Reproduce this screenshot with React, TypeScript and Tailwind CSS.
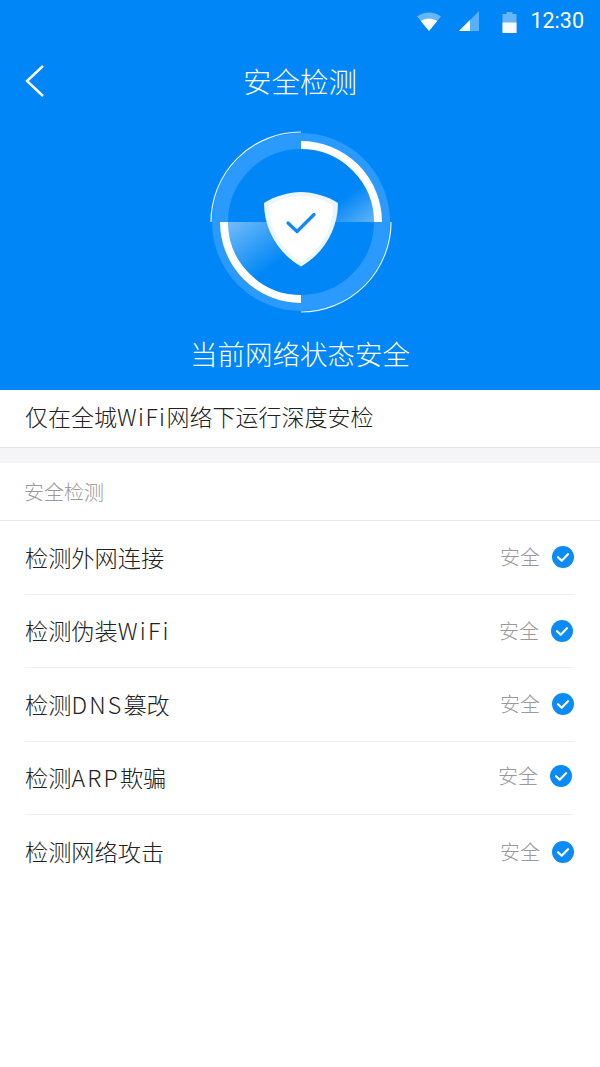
import React from "react";

const font = { fontFamily: '"Noto Sans CJK SC", "Liberation Sans", sans-serif' };

const rows = [
  { before: "检测外网连接", latin: "", after: "", lift: "-mt-[1px]", shift: "" },
  { before: "检测伪装", latin: "WiFi", after: "", lift: "mt-0", shift: "pr-[1px]" },
  { before: "检测", latin: "DNS", after: "篡改", lift: "-mt-[1px]", shift: "" },
  { before: "检测", latin: "ARP", after: "欺骗", lift: "-mt-[4px]", shift: "pr-[2px]" },
  { before: "检测网络攻击", latin: "", after: "", lift: "mt-0", shift: "" },
];

function StatusBar() {
  return (
    <div className="h-[42px] flex items-center justify-end pr-[16px] text-white">
      <svg width="26" height="22" viewBox="0 0 26 22" className="mr-[17px]">
        <path d="M1 6.5C8 1 18 1 25 6.5L13 21Z" fill="#fff" fillOpacity="0.4" />
        <path d="M4.8 11C9.8 7.5 16.2 7.5 21.2 11L13 21Z" fill="#fff" />
      </svg>
      <svg width="20" height="20" viewBox="0 0 20 20" className="mr-[23px]">
        <path d="M0 20L20 0V20Z" fill="#fff" fillOpacity="0.35" />
        <path d="M0 20L11 9V20Z" fill="#fff" />
      </svg>
      <svg width="15" height="21" viewBox="0 0 15 21" className="mr-[13px] mt-[3px]">
        <path d="M4.5 0H10.5V2H14.5V21H0.5V2H4.5Z" fill="#fff" fillOpacity="0.4" />
        <rect x="0.5" y="10.5" width="14" height="10.5" fill="#fff" fillOpacity="0.95" />
      </svg>
      <span className="text-[21.5px] leading-none font-normal" style={{ fontFamily: "Roboto, sans-serif" }}>12:30</span>
    </div>
  );
}

function ShieldDial() {
  return (
    <svg width="190" height="190" viewBox="-95 -95 190 190">
      <defs>
        <linearGradient id="wedgeTop" x1="0.3" y1="0.2" x2="0.9" y2="1">
          <stop offset="0.55" stopColor="#fff" stopOpacity="0" />
          <stop offset="1" stopColor="#fff" stopOpacity="0.34" />
        </linearGradient>
        <linearGradient id="wedgeBottom" x1="0.1" y1="0" x2="0.7" y2="0.8">
          <stop offset="0" stopColor="#fff" stopOpacity="0.42" />
          <stop offset="0.8" stopColor="#fff" stopOpacity="0" />
        </linearGradient>
      </defs>
      <circle r="81" fill="none" stroke="#2b9aff" strokeWidth="16" />
      <path d="M0 0H73A73 73 0 0 0 0 -73Z" fill="url(#wedgeTop)" />
      <path d="M0 0H-73A73 73 0 0 0 0 73Z" fill="url(#wedgeBottom)" />
      <path d="M0 -77A77 77 0 0 1 77 0" fill="none" stroke="#fff" strokeWidth="8" />
      <path d="M-77 0A77 77 0 0 0 0 77" fill="none" stroke="#fff" strokeWidth="8" />
      <path d="M0 -90A90 90 0 0 0 -90 0" fill="none" stroke="#fff" strokeWidth="1.2" strokeOpacity="0.9" />
      <path d="M0 90A90 90 0 0 0 90 0" fill="none" stroke="#fff" strokeWidth="1.2" strokeOpacity="0.9" />
      <path d="M0 -30C12 -30 26 -26 37 -19C37 8 22 32 0 44.5C-22 32 -37 8 -37 -19C-26 -26 -12 -30 0 -30Z" fill="#eaf5ff" />
      <path d="M0 -26C11 -26 23 -23 32 -16C32 8 19 29 0 40C-19 29 -32 8 -32 -16C-23 -23 -11 -26 0 -26Z" fill="#fff" />
      <path d="M-13 1L-4 9.5L13 -7.5" fill="none" stroke="#1088f5" strokeWidth="3.2" strokeLinecap="round" strokeLinejoin="round" />
    </svg>
  );
}

function CheckBadge() {
  return (
    <svg width="22" height="22" viewBox="0 0 22 22">
      <circle cx="11" cy="11" r="11" fill="#0b8bf6" />
      <path d="M6 11.2L9.7 14.7L16 8.2" fill="none" stroke="#fff" strokeWidth="2.2" strokeLinecap="round" strokeLinejoin="round" />
    </svg>
  );
}

export default function App() {
  return (
    <div className="w-[600px] h-[1067px] bg-white overflow-hidden font-light" style={font}>
      <div className="h-[390px] bg-[#0086f6] text-white flex flex-col">
        <StatusBar />
        <div className="relative h-[78px] flex items-center justify-center">
          <svg width="22" height="34" viewBox="0 0 22 34" className="absolute left-[24px] top-[22px]">
            <path d="M19 2L3 17L19 32" fill="none" stroke="#fff" strokeWidth="2.4" />
          </svg>
          <span className="text-[28.5px] leading-none">安全检测</span>
        </div>
        <div className="flex justify-center mt-[7px] pl-[1px]">
          <ShieldDial />
        </div>
        <div className="text-center text-[27.5px] leading-none mt-[23px]">当前网络状态安全</div>
      </div>

      <div className="h-[58px] flex items-center pl-[25px] pb-[4px] text-[23px] text-[#222] border-b border-[#e4e4e4]">
        <span>仅在全城<span className="tracking-[1.4px]">WiFi</span>网络下运行深度安检</span>
      </div>
      <div className="h-[15px] bg-[#f5f5f7]" />
      <div className="h-[58px] flex items-center pl-[24px] text-[20px] text-[#999] border-b border-[#e8e8e8]">
        安全检测
      </div>

      <div className="pl-[25px] pr-[26px]">
        {rows.map((row, i) => (
          <div
            key={row.before + row.after}
            className={`h-[73.5px] flex items-center justify-between ${i < rows.length - 1 ? "border-b border-[#f0f0f0]" : ""}`}
          >
            <span className="text-[23.2px] text-[#222]">
              {row.before}
              <span className="tracking-[2.2px]">{row.latin}</span>
              {row.after}
            </span>
            <span className={`flex items-center gap-[12px] ${row.lift} ${row.shift}`}>
              <span className="text-[20px] text-[#999]">安全</span>
              <CheckBadge />
            </span>
          </div>
        ))}
      </div>
    </div>
  );
}
